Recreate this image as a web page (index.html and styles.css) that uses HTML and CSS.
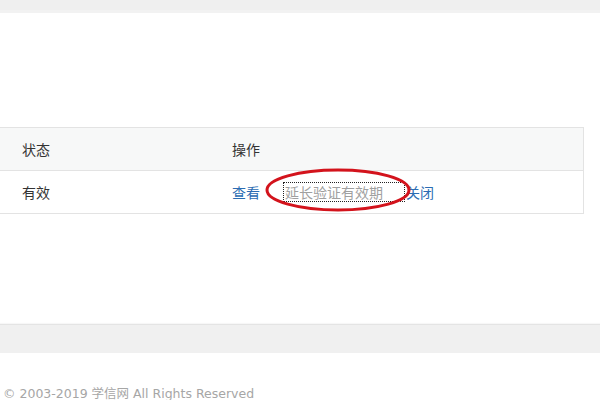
FILE: index.html
```html
<!DOCTYPE html>
<html lang="zh-CN">
<head>
<meta charset="utf-8">
<title>学信网</title>
<link rel="stylesheet" href="styles.css">
</head>
<body>
<div class="topbar"></div>
<main class="main">
  <div class="table">
    <div class="row head">
      <div class="cell">状态</div>
      <div class="cell">操作</div>
    </div>
    <div class="row">
      <div class="cell">有效</div>
      <div class="cell ops">
        <a class="link" href="#">查看</a>
        <span class="extend">延长验证有效期</span>
        <a class="link" href="#">关闭</a>
        <svg class="mark" width="150" height="48" viewBox="0 0 150 48">
          <ellipse cx="74" cy="23" rx="71" ry="20" fill="none" stroke="#d3131c" stroke-width="3"/>
        </svg>
      </div>
    </div>
  </div>
</main>
<div class="band"></div>
<footer class="footer">© 2003-2019 学信网 All Rights Reserved</footer>
</body>
</html>
```

FILE: styles.css
```css
html, body {
  margin: 0;
  padding: 0;
  background: #fff;
}
body {
  width: 600px;
  overflow: hidden;
  font-family: "Noto Sans CJK SC", "Liberation Sans", sans-serif;
  font-size: 14px;
  color: #333;
}
.topbar {
  height: 10px;
  background: #efefef;
  border-bottom: 3px solid #f2f2f2;
}
.main {
  height: 311px;
  padding-top: 114px;
  box-sizing: border-box;
}
.table {
  margin-left: -1px;
  width: 585px;
  border: 1px solid #e3e3e3;
  box-sizing: border-box;
}
.row {
  display: grid;
  grid-template-columns: 210px 1fr;
  height: 42px;
}
.row + .row {
  border-top: 1px solid #e3e3e3;
}
.head {
  background: #f7f8f8;
}
.cell {
  display: flex;
  align-items: center;
  padding-left: 22px;
  line-height: 20px;
}
.ops {
  position: relative;
}
.link {
  color: #2b6cb3;
  text-decoration: none;
}
.extend {
  display: inline-block;
  width: 120px;
  height: 18px;
  line-height: 18px;
  box-sizing: border-box;
  margin-left: 24px;
  margin-right: 2px;
  padding-left: 1px;
  outline: 1px dotted #222;
  color: #a0a0a0;
}
.mark {
  position: absolute;
  left: 54px;
  top: -4px;
}
.band {
  height: 28px;
  background: #f0f0f0;
  border-top: 1px solid #e4e4e4;
  box-shadow: 0 -1px 1px rgba(0,0,0,0.03);
}
.footer {
  padding: 31px 0 0 3px;
  font-family: "DejaVu Sans", "Noto Sans CJK SC", sans-serif;
  font-size: 12.5px;
  line-height: 20px;
  color: #a6a6a6;
  white-space: nowrap;
}
```
